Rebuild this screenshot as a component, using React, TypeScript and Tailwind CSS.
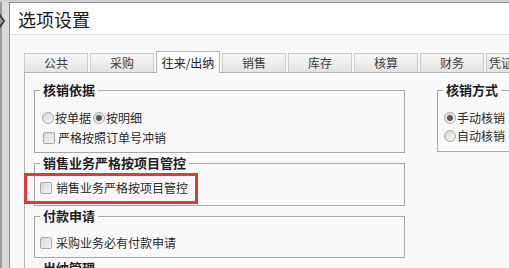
const tabs = ["公共", "采购", "往来/出纳", "销售", "库存", "核算", "财务", "凭证"];

function Check() {
  return (
    <span className="w-[12px] h-[12px] shrink-0 rounded-[2px] border border-[#a9a9a9] bg-linear-to-br from-[#d9d9d9] to-[#f5f5f5]" />
  );
}

function Radio({ on = false }: { on?: boolean }) {
  return (
    <span className="w-[12px] h-[12px] shrink-0 rounded-full border border-[#a9a9a9] bg-linear-to-br from-[#d6d6d6] to-[#f7f7f7] flex items-center justify-center">
      {on && <span className="w-[6px] h-[6px] rounded-full bg-[#5a5a5a]" />}
    </span>
  );
}

function Group({ title, className = "", children }: { title: string; className?: string; children?: React.ReactNode }) {
  return (
    <fieldset className={`border border-[#a8a8a8] ${className}`}>
      <legend className="ml-[5px] px-[3px] text-[13px] leading-[16px] font-bold text-[#1e1e1e]">{title}</legend>
      {children}
    </fieldset>
  );
}

export default function App() {
  return (
    <div className="w-[509px] h-[268px] overflow-hidden flex bg-[#cfcfcf] pt-[2px] font-['Noto_Sans_CJK_SC',sans-serif] text-[12px] text-[#2a2a2a]">
      {/* window behind the dialog */}
      <div className="w-[9px] shrink-0 border-l-[2px] border-[#9c9c9c] bg-[#dadada] pt-[12px]">
        <svg width="6" height="14" viewBox="0 0 6 14" className="-ml-[3px]">
          <path d="M0 0 L5 7 L0 14" fill="none" stroke="#3a3a3a" strokeWidth="2" />
        </svg>
      </div>

      {/* dialog */}
      <div className="flex-1 flex flex-col border-t border-l border-[#8f8f8f] bg-[#f9f9f9]">
        <div className="h-[32px] shrink-0 bg-white border-b border-[#dedede] flex items-center pl-[8px] text-[18px] leading-[24px] text-[#1a1a1a]">
          选项设置
        </div>

        <div className="flex-1 pt-[16px] pl-[14px]">
          {/* tabs */}
          <div className="flex items-end gap-[2px] h-[21px]">
            {tabs.map((t, i) => {
              const active = t === "往来/出纳";
              const last = i === tabs.length - 1;
              return active ? (
                <div
                  key={t}
                  className="relative z-10 w-[64px] h-[22px] -mb-[1px] shrink-0 border border-b-0 border-[#b5b5b5] bg-[#fbfbfb] flex items-center justify-center leading-[14px] text-[#222]"
                >
                  {t}
                </div>
              ) : (
                <div
                  key={t}
                  className={`w-[64px] h-[19px] shrink-0 border border-b-0 border-[#c9c9c9] bg-linear-to-b from-[#f7f7f7] to-[#e4e4e4] flex items-center leading-[14px] text-[#3c3c3c] ${
                    last ? "justify-start pl-[2px]" : "justify-center"
                  }`}
                >
                  {t}
                </div>
              );
            })}
          </div>

          {/* tab panel */}
          <div className="relative h-[300px] border border-[#b5b5b5] bg-[#f9f9f9] pl-[9px] pt-[9px] flex gap-[32px]">
            <div className="w-[371px] shrink-0 flex flex-col">
              <Group title="核销依据" className="pb-[6px]">
                <div className="mt-[12px] h-[16px] ml-[7px] flex items-center">
                  <Radio />
                  <span className="ml-[1px] leading-[16px]">按单据</span>
                  <span className="ml-[2px]" />
                  <Radio on />
                  <span className="ml-[1px] leading-[16px]">按明细</span>
                </div>
                <div className="mt-[4px] h-[16px] ml-[8px] flex items-center gap-[3px]">
                  <Check />
                  <span className="leading-[16px]">严格按照订单号冲销</span>
                </div>
              </Group>

              <Group title="销售业务严格按项目管控" className="mt-[2px] pb-[9px]">
                <div className="mt-[9px] h-[16px] ml-[5px] flex items-center gap-[4px]">
                  <Check />
                  <span className="leading-[16px]">销售业务严格按项目管控</span>
                </div>
              </Group>

              <Group title="付款申请" className="mt-[2px] pb-[6px]">
                <div className="mt-[11px] h-[16px] ml-[5px] flex items-center gap-[4px]">
                  <Check />
                  <span className="leading-[16px]">采购业务必有付款申请</span>
                </div>
              </Group>

              <Group title="出纳管理" className="mt-[2px] h-[60px]" />
            </div>

            <div className="w-[120px] shrink-0">
              <Group title="核销方式" className="pb-[7px]">
                <div className="mt-[12px] h-[16px] ml-[6px] flex items-center">
                  <Radio on />
                  <span className="ml-[1px] leading-[16px]">手动核销</span>
                </div>
                <div className="mt-[2px] h-[16px] ml-[6px] flex items-center">
                  <Radio />
                  <span className="ml-[1px] leading-[16px]">自动核销</span>
                </div>
              </Group>
            </div>

            {/* red highlight annotation */}
            <div className="absolute -left-[1px] top-[100px] w-[174px] h-[31px] border-[3px] border-[#e0393c] pointer-events-none" />
          </div>
        </div>
      </div>
    </div>
  );
}
